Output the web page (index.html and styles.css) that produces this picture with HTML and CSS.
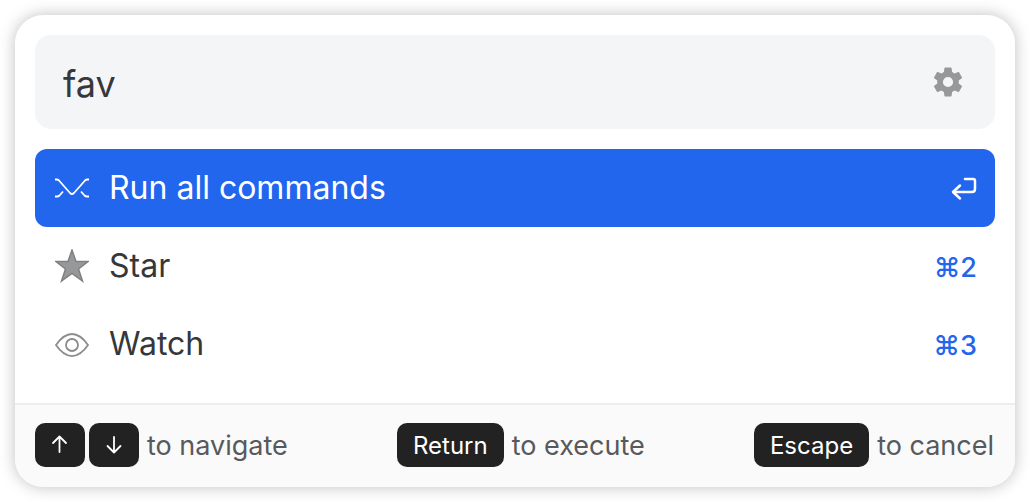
FILE: index.html
```html
<!DOCTYPE html>
<html lang="en">
<head>
    <meta charset="UTF-8">
    <meta name="viewport" content="width=device-width, initial-scale=1.0">
    <title>Commands</title>
    <link rel="stylesheet" href="styles.css">
</head>
<body>
    <main class="palette">
        <div class="palette-body">
            <div class="search">
                <input type="text" class="search-input" value="fav" aria-label="Search commands">
                <button type="button" class="settings" aria-label="Settings">
                    <svg width="36" height="36" viewBox="0 0 24 24" fill="currentColor">
                        <path d="M19.14 12.94c.04-.3.06-.61.06-.94 0-.32-.02-.64-.07-.94l2.03-1.58c.18-.14.23-.41.12-.61l-1.92-3.32c-.12-.22-.37-.29-.59-.22l-2.39.96c-.5-.38-1.03-.7-1.62-.94l-.36-2.54c-.04-.24-.24-.41-.48-.41h-3.84c-.24 0-.43.17-.47.41l-.36 2.54c-.59.24-1.13.57-1.62.94l-2.39-.96c-.22-.08-.47 0-.59.22L2.74 8.87c-.12.21-.08.47.12.61l2.03 1.58c-.05.3-.09.63-.09.94s.02.64.07.94l-2.03 1.58c-.18.14-.23.41-.12.61l1.92 3.32c.12.22.37.29.59.22l2.39-.96c.5.38 1.03.7 1.62.94l.36 2.54c.05.24.24.41.48.41h3.84c.24 0 .44-.17.47-.41l.36-2.54c.59-.24 1.13-.56 1.62-.94l2.39.96c.22.08.47 0 .59-.22l1.92-3.32c.12-.22.07-.47-.12-.61l-2.01-1.58zM12 15.4a3.4 3.4 0 1 1 0-6.8 3.4 3.4 0 0 1 0 6.8z"/>
                    </svg>
                </button>
            </div>

            <div class="commands">
                <button type="button" class="command selected">
                    <svg class="command-icon" width="34" height="34" viewBox="0 0 34 34" fill="none" stroke="currentColor" stroke-width="1.8">
                        <path d="M0 8.500h1.500q1.500 0 2.500 1L15 22q2 2 4 0L30 9.500q1-1 2.500-1H34"/>
                        <path d="M0 25.500h2q1.500 0 2.500-1l3.500-4M34 25.500h-2q-1.500 0-2.500-1l-3.500-4"/>
                    </svg>
                    <span class="command-name">Run all commands</span>
                    <svg class="return-icon" width="26" height="26" viewBox="0 0 26 26" fill="none" stroke="currentColor" stroke-width="2.5" stroke-linecap="round" stroke-linejoin="round">
                        <path d="M14 4h8q2 0 2 2v8q0 3-3 3H3M9 10.500l-7 6.500 7 6.500"/>
                    </svg>
                </button>
                <button type="button" class="command">
                    <svg class="command-icon" width="34" height="34" viewBox="0 0 34 34" fill="#97989a" stroke="#808182" stroke-width="1.5">
                        <path d="M17 1l4 11.500h12l-9.500 7.500 4 12-10.500-7.500L6.500 32l4-12L1 12.500h12z"/>
                    </svg>
                    <span class="command-name">Star</span>
                    <span class="shortcut">⌘2</span>
                </button>
                <button type="button" class="command">
                    <svg class="command-icon" width="34" height="34" viewBox="0 0 34 34" fill="none" stroke="#8b8c8d" stroke-width="1.8">
                        <path d="M1 18C11 3.300 23 3.300 33 18C23 32.700 11 32.700 1 18z"/>
                        <circle cx="17" cy="18" r="6"/>
                    </svg>
                    <span class="command-name">Watch</span>
                    <span class="shortcut">⌘3</span>
                </button>
            </div>
        </div>

        <footer class="hints">
            <div class="hint">
                <kbd class="key arrow">
                    <svg width="18" height="20" viewBox="0 0 18 20" fill="none" stroke="currentColor" stroke-width="1.8" stroke-linecap="round" stroke-linejoin="round">
                        <path d="M8.500 17V2M2 8l6.500-6.500L15 8"/>
                    </svg>
                </kbd>
                <kbd class="key arrow">
                    <svg width="18" height="20" viewBox="0 0 18 20" fill="none" stroke="currentColor" stroke-width="1.8" stroke-linecap="round" stroke-linejoin="round">
                        <path d="M9 2v15M2.500 11L9 17.500l6.500-6.500"/>
                    </svg>
                </kbd>
                <span class="hint-text">to navigate</span>
            </div>
            <div class="hint">
                <kbd class="key">Return</kbd>
                <span class="hint-text">to execute</span>
            </div>
            <div class="hint">
                <kbd class="key">Escape</kbd>
                <span class="hint-text">to cancel</span>
            </div>
        </footer>
    </main>
</body>
</html>
```
FILE: styles.css
```css
* {
    box-sizing: border-box;
}
body {
    margin: 0;
    padding: 15px;
    background: #fff;
    color: #36373a;
    font-family: Inter, sans-serif;
}
button,
input {
    border: none;
    background: none;
    color: inherit;
    font-family: inherit;
}
.palette {
    border-radius: 28px;
    background: #fff;
    box-shadow: 0 0 16px rgba(0, 0, 0, 0.25);
    overflow: hidden;
}
.palette-body {
    display: flex;
    flex-direction: column;
    gap: 20px;
    padding: 20px;
}
.search {
    display: flex;
    align-items: center;
    padding: 20px 29px 20px 28px;
    border-radius: 16px;
    background: #f4f5f7;
}
.search-input {
    flex: 1;
    min-width: 0;
    height: 54px;
    padding: 4px 0 0;
    font-size: 36px;
    outline: none;
}
.settings {
    display: flex;
    padding: 0;
    color: #97989a;
    cursor: pointer;
}
.commands {
    display: flex;
    flex-direction: column;
}
.command {
    display: flex;
    align-items: center;
    gap: 20px;
    height: 78px;
    padding: 0 18px 0 20px;
    border-radius: 12px;
    text-align: left;
    cursor: pointer;
}
.command.selected {
    background: #2266ed;
    color: #fff;
}
.command-name {
    flex: 1;
    padding-bottom: 2px;
    font-size: 32px;
}
.shortcut {
    padding-top: 2px;
    color: #2266ed;
    font-size: 27px;
    font-weight: 500;
}
.hints {
    display: flex;
    justify-content: space-between;
    padding: 18px 21px 20px 20px;
    border-top: 2px solid #eee;
    background: #fafafa;
}
.hint {
    display: flex;
    align-items: center;
    gap: 4px;
}
.key {
    display: flex;
    align-items: center;
    justify-content: center;
    height: 44px;
    padding: 0 16px;
    border-radius: 10px;
    background: #222;
    color: #fff;
    font-family: inherit;
    font-size: 24px;
}
.hint-text {
    padding-left: 4px;
    color: #58595c;
    font-size: 27px;
}
```
